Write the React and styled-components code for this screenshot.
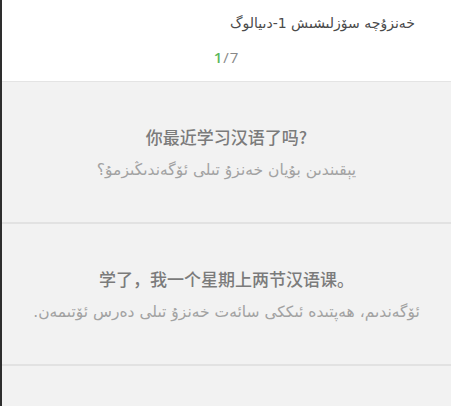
import React from 'react';
import styled, { createGlobalStyle } from 'styled-components';

const Global = createGlobalStyle`
  html, body {
    margin: 0;
    padding: 0;
    height: 100%;
    background: #f2f2f2;
  }
  #root {
    height: 100%;
  }
`;

const Page = styled.div`
  height: 406px;
  display: flex;
  flex-direction: column;
  border-left: 2px solid #2e2e2e;
  background: #f2f2f2;
  overflow: hidden;
  font-family: "DejaVu Sans", "Noto Sans CJK SC", sans-serif;
`;

const Header = styled.header`
  background: #ffffff;
  height: 82px;
  flex-shrink: 0;
  display: flex;
  flex-direction: column;
  border-bottom: 1px solid #e4e4e4;
  box-sizing: border-box;
`;

const Title = styled.h1`
  margin: 0;
  padding: 12px 36px 0 0;
  direction: rtl;
  text-align: right;
  font-size: 14px;
  font-weight: normal;
  color: #4a4a4a;
  line-height: 22px;
`;

const Counter = styled.div`
  margin-top: 13px;
  text-align: center;
  font-family: "Open Sans", "DejaVu Sans", sans-serif;
  font-size: 15px;
  color: #888;
  letter-spacing: 1px;
`;

const Current = styled.span`
  color: #5cb85c;
  font-weight: 600;
`;

const Card = styled.section`
  height: 142px;
  flex-shrink: 0;
  display: flex;
  flex-direction: column;
  align-items: center;
  justify-content: center;
  gap: 12px;
  border-bottom: 2px solid #e2e2e2;
  padding-bottom: 2px;
  box-sizing: border-box;
`;

const Chinese = styled.div`
  font-family: "Noto Sans CJK SC", sans-serif;
  font-size: 17px;
  font-weight: 500;
  color: #7b7b7b;
`;

const Uyghur = styled.div`
  direction: rtl;
  font-family: "DejaVu Sans", sans-serif;
  font-size: 15.5px;
  color: #a2a2a2;
`;

const lines = [
  {
    zh: '你最近学习汉语了吗?',
    ug: 'يېقىندىن بۇيان خەنزۇ تىلى ئۆگەندىڭىزمۇ؟',
  },
  {
    zh: '学了，我一个星期上两节汉语课。',
    ug: 'ئۆگەندىم، ھەپتىدە ئىككى سائەت خەنزۇ تىلى دەرس ئۆتىمەن.',
  },
];

export default function App() {
  return (
    <>
      <Global />
      <Page>
        <Header>
          <Title>خەنزۇچە سۆزلىشىش 1-دىيالوگ</Title>
          <Counter>
            <Current>1</Current>/7
          </Counter>
        </Header>
        {lines.map((l, i) => (
          <Card key={i}>
            <Chinese>{l.zh}</Chinese>
            <Uyghur>{l.ug}</Uyghur>
          </Card>
        ))}
      </Page>
    </>
  );
}
